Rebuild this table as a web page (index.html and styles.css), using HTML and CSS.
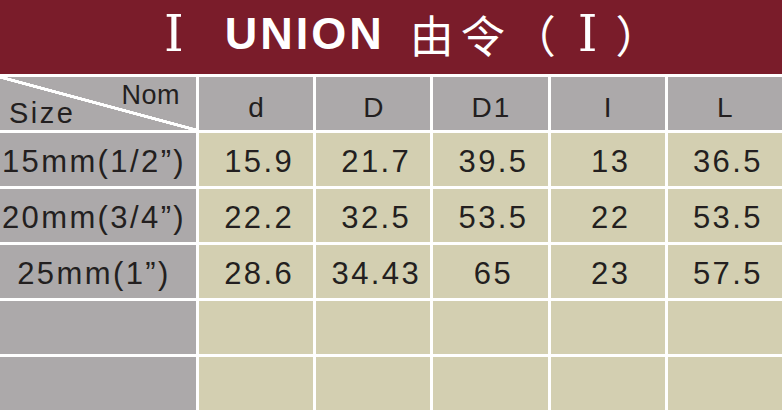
FILE: index.html
```html
<!DOCTYPE html>
<html lang="zh">
<head>
<meta charset="utf-8">
<title>UNION 由令</title>
<link rel="stylesheet" href="styles.css">
</head>
<body>
<div class="page">
  <header class="title">
    <span class="roman first">Ⅰ</span>
    <span class="en">UNION</span>
    <span class="cn">由令</span>
    <span class="paren open">（</span><span class="roman second">Ⅰ</span><span class="paren close">）</span>
  </header>
  <div class="table">
    <div class="cell corner"><span class="nom">Nom</span><span class="size">Size</span></div>
    <div class="cell head">d</div>
    <div class="cell head">D</div>
    <div class="cell head">D1</div>
    <div class="cell head">I</div>
    <div class="cell head">L</div>

    <div class="cell side">15mm(1/2”)</div>
    <div class="cell val">15.9</div>
    <div class="cell val">21.7</div>
    <div class="cell val">39.5</div>
    <div class="cell val">13</div>
    <div class="cell val">36.5</div>

    <div class="cell side">20mm(3/4”)</div>
    <div class="cell val">22.2</div>
    <div class="cell val">32.5</div>
    <div class="cell val">53.5</div>
    <div class="cell val">22</div>
    <div class="cell val">53.5</div>

    <div class="cell side">25mm(1”)</div>
    <div class="cell val">28.6</div>
    <div class="cell val">34.43</div>
    <div class="cell val">65</div>
    <div class="cell val">23</div>
    <div class="cell val">57.5</div>

    <div class="cell side"></div>
    <div class="cell val"></div>
    <div class="cell val"></div>
    <div class="cell val"></div>
    <div class="cell val"></div>
    <div class="cell val"></div>

    <div class="cell side"></div>
    <div class="cell val"></div>
    <div class="cell val"></div>
    <div class="cell val"></div>
    <div class="cell val"></div>
    <div class="cell val"></div>
  </div>
</div>
</body>
</html>
```
FILE: styles.css
```css
html, body {
  margin: 0;
  padding: 0;
  background: #ffffff;
}

.page {
  width: 782px;
  height: 410px;
  overflow: hidden;
  font-family: "Liberation Sans", Arial, sans-serif;
  color: #231f20;
}

.title {
  height: 74px;
  background: #7a1c2a;
  color: #ffffff;
  display: flex;
  align-items: center;
  padding-left: 164px;
  box-sizing: border-box;
  white-space: nowrap;
}

.roman {
  font-family: "Liberation Serif", "DejaVu Serif", serif;
  font-size: 50px;
  line-height: 74px;
  font-weight: 400;
  position: relative;
  top: -3px;
}

.second {
  margin-left: 22px;
  margin-right: 18px;
}

.en {
  font-family: "Liberation Sans", Arial, sans-serif;
  font-weight: 700;
  font-size: 45px;
  letter-spacing: 3px;
  margin-left: 41px;
  line-height: 74px;
  position: relative;
  top: -3px;
}

.cn {
  font-family: "Noto Sans CJK SC", sans-serif;
  font-size: 44px;
  letter-spacing: 7px;
  margin-left: 25px;
  line-height: 74px;
  position: relative;
  top: -3px;
}

.paren {
  font-family: "Noto Sans CJK SC", sans-serif;
  font-size: 44px;
  line-height: 74px;
  position: relative;
  top: -3px;
}

.table {
  display: grid;
  grid-template-columns: 196px repeat(5, 1fr);
  grid-auto-rows: 53px;
  gap: 3px;
  padding-top: 3px;
  background: #ffffff;
}

.cell {
  display: flex;
  align-items: center;
  justify-content: center;
  box-sizing: border-box;
  white-space: nowrap;
}

.head {
  background: #aca9aa;
  font-size: 28px;
  line-height: 28px;
  letter-spacing: 2px;
  padding-top: 8px;
  padding-left: 2px;
}

.side {
  background: #aca9aa;
  font-size: 31px;
  line-height: 31px;
  letter-spacing: 2.4px;
  padding-top: 3px;
  padding-right: 8px;
}

.val {
  background: #d3cfb1;
  font-size: 31px;
  line-height: 31px;
  letter-spacing: 2.4px;
  padding-top: 3px;
  padding-left: 6px;
}

.corner {
  display: grid;
  grid-template: 1fr / 1fr;
  background-color: #aca9aa;
  background-image: linear-gradient(to top right,
    transparent calc(50% - 1.7px),
    #ffffff calc(50% - 1.4px),
    #ffffff calc(50% + 1.4px),
    transparent calc(50% + 1.7px));
  padding: 5px 16px 2px 9px;
}

.nom {
  grid-area: 1 / 1;
  align-self: start;
  justify-self: end;
  font-size: 27px;
  line-height: 27px;
  letter-spacing: 0.5px;
}

.size {
  grid-area: 1 / 1;
  align-self: end;
  justify-self: start;
  font-size: 29px;
  line-height: 29px;
  letter-spacing: 2.5px;
}
```
